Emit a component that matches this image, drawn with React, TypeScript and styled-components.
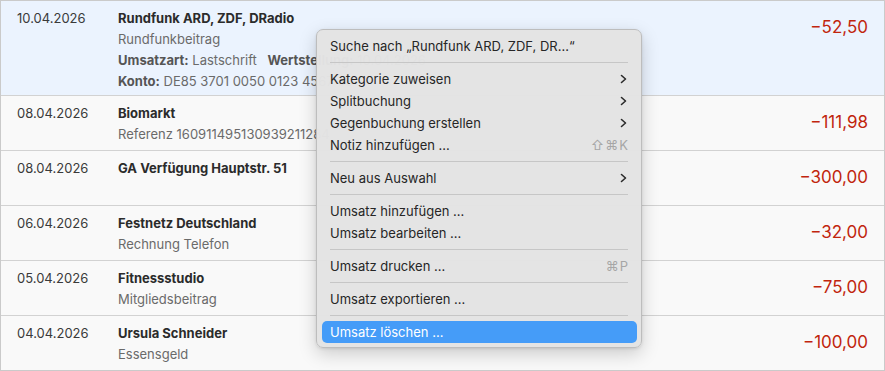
import styled, { createGlobalStyle } from "styled-components";

const GlobalStyle = createGlobalStyle`
  html, body {
    margin: 0;
    padding: 0;
    background: #ffffff;
  }
  body {
    font-family: Inter, "Noto Sans", "DejaVu Sans", sans-serif;
    -webkit-font-smoothing: antialiased;
  }
`;

const Frame = styled.div`
  position: relative;
  width: 885px;
  height: 371px;
  box-sizing: border-box;
  border: 1px solid #cacaca;
  background-color: #f9f9f9;
  overflow: hidden;
  display: flex;
  flex-direction: column;
`;

const Row = styled.div<{ $selected?: boolean; $height: number }>`
  display: grid;
  grid-template-columns: 101px 1fr auto;
  align-items: start;
  box-sizing: content-box;
  height: ${(p) => p.$height}px;
  padding: 0 16px;
  flex-shrink: 0;
  background-color: ${(p) => (p.$selected ? "#ebf3fe" : "#f9f9f9")};
  border-bottom: 1px solid #d2d2d2;
  &:last-child {
    border-bottom: none;
  }
`;

const DateCell = styled.div`
  padding-top: 7px;
  font-size: 13px;
  line-height: 21px;
  color: #3a3a3a;
`;

const Details = styled.div`
  padding-top: 7px;
  display: flex;
  flex-direction: column;
  min-width: 0;
  white-space: nowrap;
`;

const Title = styled.div`
  font-size: 13px;
  line-height: 21px;
  font-weight: 700;
  color: #2b2b2b;
`;

const Line = styled.div`
  font-size: 13px;
  line-height: 21px;
  color: #6a6a6a;
`;

const Label = styled.span<{ $gap?: boolean }>`
  font-weight: 700;
  color: #555555;
  margin-left: ${(p) => (p.$gap ? "7px" : "0")};
`;

const Amount = styled.div`
  margin-top: 16px;
  font-size: 17px;
  line-height: 20px;
  color: #c1250d;
  text-align: right;
`;

const Menu = styled.div`
  position: absolute;
  left: 315px;
  top: 28px;
  width: 326px;
  box-sizing: border-box;
  padding: 5px 4px 4px 5px;
  background-color: rgba(227, 227, 227, 0.98);
  border: 1px solid #bdbdbd;
  border-radius: 7px;
  box-shadow: 0 6px 18px rgba(0, 0, 0, 0.18), 0 1px 3px rgba(0, 0, 0, 0.1);
  display: flex;
  flex-direction: column;
`;

const MenuItem = styled.div<{ $active?: boolean }>`
  height: 22px;
  display: flex;
  align-items: center;
  justify-content: space-between;
  padding: 0 10px 0 8px;
  border-radius: 5px;
  font-size: 13px;
  color: ${(p) => (p.$active ? "#ffffff" : "#262626")};
  background-color: ${(p) => (p.$active ? "#459cf8" : "transparent")};
`;

const Separator = styled.div`
  height: 1px;
  margin: 5px 9px 5px 8px;
  background-color: #c6c6c6;
`;

const Shortcut = styled.span`
  font-size: 13px;
  color: #a6a6a6;
  margin-right: -2px;
  letter-spacing: 1px;
`;

function Chevron() {
  return (
    <svg width="7" height="10" viewBox="0 0 7 10">
      <polyline
        points="1.5,1.5 5.5,5 1.5,8.5"
        fill="none"
        stroke="#2a2a2a"
        strokeWidth="1.6"
        strokeLinecap="round"
        strokeLinejoin="round"
      />
    </svg>
  );
}

interface Entry {
  date: string;
  title: string;
  sub?: string;
  amount: string;
}

const entries: Entry[] = [
  { date: "08.04.2026", title: "Biomarkt", sub: "Referenz 160911495130939211284", amount: "−111,98" },
  { date: "08.04.2026", title: "GA Verfügung Hauptstr. 51", amount: "−300,00" },
  { date: "06.04.2026", title: "Festnetz Deutschland", sub: "Rechnung Telefon", amount: "−32,00" },
  { date: "05.04.2026", title: "Fitnessstudio", sub: "Mitgliedsbeitrag", amount: "−75,00" },
  { date: "04.04.2026", title: "Ursula Schneider", sub: "Essensgeld", amount: "−100,00" },
];

type MenuEntry =
  | { kind: "sep" }
  | { kind: "item"; label: string; sub?: boolean; shortcut?: string; active?: boolean };

const menu: MenuEntry[] = [
  { kind: "item", label: "Suche nach „Rundfunk ARD, ZDF, DR...“" },
  { kind: "sep" },
  { kind: "item", label: "Kategorie zuweisen", sub: true },
  { kind: "item", label: "Splitbuchung", sub: true },
  { kind: "item", label: "Gegenbuchung erstellen", sub: true },
  { kind: "item", label: "Notiz hinzufügen ...", shortcut: "⇧⌘K" },
  { kind: "sep" },
  { kind: "item", label: "Neu aus Auswahl", sub: true },
  { kind: "sep" },
  { kind: "item", label: "Umsatz hinzufügen ..." },
  { kind: "item", label: "Umsatz bearbeiten ..." },
  { kind: "sep" },
  { kind: "item", label: "Umsatz drucken ...", shortcut: "⌘P" },
  { kind: "sep" },
  { kind: "item", label: "Umsatz exportieren ..." },
  { kind: "sep" },
  { kind: "item", label: "Umsatz löschen ...", active: true },
];

export default function App() {
  return (
    <>
      <GlobalStyle />
      <Frame>
        <Row $selected $height={94}>
          <DateCell>10.04.2026</DateCell>
          <Details>
            <Title>Rundfunk ARD, ZDF, DRadio</Title>
            <Line>Rundfunkbeitrag</Line>
            <Line>
              <Label>Umsatzart:</Label> Lastschrift <Label $gap>Wertstellung:</Label> 10.04.2026
            </Line>
            <Line>
              <Label>Konto:</Label> DE85 3701 0050 0123 4567 89
            </Line>
          </Details>
          <Amount>−52,50</Amount>
        </Row>
        {entries.map((e, i) => (
          <Row key={i} $height={54}>
            <DateCell>{e.date}</DateCell>
            <Details>
              <Title>{e.title}</Title>
              {e.sub ? <Line>{e.sub}</Line> : null}
            </Details>
            <Amount>{e.amount}</Amount>
          </Row>
        ))}

        <Menu>
          {menu.map((m, i) =>
            m.kind === "sep" ? (
              <Separator key={i} />
            ) : (
              <MenuItem key={i} $active={m.active}>
                <span>{m.label}</span>
                {m.sub ? <Chevron /> : null}
                {m.shortcut ? <Shortcut>{m.shortcut}</Shortcut> : null}
              </MenuItem>
            )
          )}
        </Menu>
      </Frame>
    </>
  );
}
